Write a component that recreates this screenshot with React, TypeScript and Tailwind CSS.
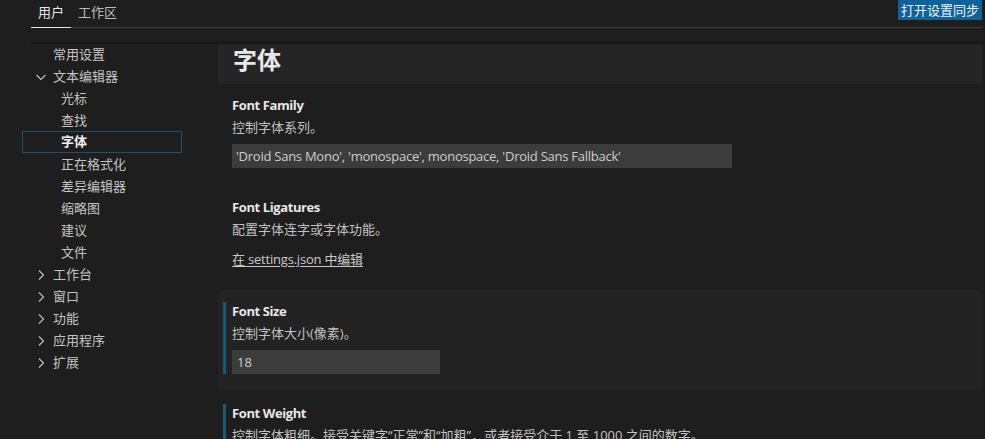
import React from "react";

const FONT = { fontFamily: '"Open Sans", "Noto Sans CJK SC", sans-serif' };

function ChevronRight() {
  return (
    <svg width="16" height="16" viewBox="0 0 16 16" fill="none" stroke="currentColor" strokeWidth="1.1">
      <path d="M6 3.5 L10.5 8 L6 12.5" />
    </svg>
  );
}

function ChevronDown() {
  return (
    <svg width="16" height="16" viewBox="0 0 16 16" fill="none" stroke="currentColor" strokeWidth="1.1">
      <path d="M3.5 6 L8 10.5 L12.5 6" />
    </svg>
  );
}

type Item = { label: string; level: 1 | 2; chevron?: "down" | "right"; selected?: boolean };

const items: Item[] = [
  { label: "常用设置", level: 1 },
  { label: "文本编辑器", level: 1, chevron: "down" },
  { label: "光标", level: 2 },
  { label: "查找", level: 2 },
  { label: "字体", level: 2, selected: true },
  { label: "正在格式化", level: 2 },
  { label: "差异编辑器", level: 2 },
  { label: "缩略图", level: 2 },
  { label: "建议", level: 2 },
  { label: "文件", level: 2 },
  { label: "工作台", level: 1, chevron: "right" },
  { label: "窗口", level: 1, chevron: "right" },
  { label: "功能", level: 1, chevron: "right" },
  { label: "应用程序", level: 1, chevron: "right" },
  { label: "扩展", level: 1, chevron: "right" },
];

export default function App() {
  return (
    <div
      className="w-[985px] h-[439px] overflow-hidden bg-[#1e1e1e] text-[#cccccc] text-[13px]"
      style={FONT}
    >
      {/* top tabs */}
      <div className="flex items-start ml-[31px] mr-[3px] h-[28px] border-b border-[#3f3f3f]">
        <div className="h-[28px] px-[7px] -mb-px border-b border-[#e7e7e7] text-[#e7e7e7] leading-[24px]">
          用户
        </div>
        <div className="h-[28px] px-[7px] text-[#bdbdbd] leading-[24px]">工作区</div>
        <div className="ml-auto h-[20px] px-[3px] bg-[#0e639c] text-[#f0f0f0] leading-[20px]">
          打开设置同步
        </div>
      </div>

      <div className="mt-[14px] ml-[31px] h-[2px] bg-[#161616]" />

      <div className="flex">
        {/* sidebar */}
        <div className="w-[218px] shrink-0 pl-[22px]">
          <div className="w-[160px]">
            {items.map((it) => (
              <div
                key={it.label}
                className={
                  it.selected
                    ? "relative h-[22px] flex items-center border border-[#1d4f6e] -mt-px mb-px font-bold text-[#f0f0f0]"
                    : "relative h-[22px] flex items-center text-[#c4c4c4]"
                }
              >
                {it.chevron && (
                  <span className="absolute left-[11px] top-[3px] text-[#c4c4c4]">
                    {it.chevron === "down" ? <ChevronDown /> : <ChevronRight />}
                  </span>
                )}
                <span className={it.level === 1 ? "pl-[31px]" : it.selected ? "pl-[38px]" : "pl-[39px]"}>
                  {it.label}
                </span>
              </div>
            ))}
          </div>
        </div>

        {/* main */}
        <div className="w-[764px] shrink-0">
          <div className="h-[40px] bg-[#252526] pl-[15px] text-[24px] font-bold leading-[32px] text-[#e8e8e8]">
            字体
          </div>

          {/* Font Family */}
          <div className="pt-[12px] pb-[18px] pl-[14px]">
            <div className="h-[18px] leading-[18px] font-bold tracking-[-0.4px] text-[#e7e7e7]">Font Family</div>
            <div className="mt-[4px] h-[18px] leading-[18px] text-[#c2c2c2]">控制字体系列。</div>
            <div className="mt-[8px] w-[500px] h-[24px] bg-[#3c3c3c] pl-[4px] leading-[24px] tracking-[-0.25px] text-[#cccccc]">
              'Droid Sans Mono', 'monospace', monospace, 'Droid Sans Fallback'
            </div>
          </div>

          {/* Font Ligatures */}
          <div className="pt-[12px] pb-[22px] pl-[14px]">
            <div className="h-[18px] leading-[18px] font-bold tracking-[-0.4px] text-[#e7e7e7]">Font Ligatures</div>
            <div className="mt-[4px] h-[18px] leading-[18px] text-[#c2c2c2]">配置字体连字或字体功能。</div>
            <div className="mt-[12px] h-[18px] leading-[18px] tracking-[-0.2px] text-[#c8c8c8] underline underline-offset-2">
              在 settings.json 中编辑
            </div>
          </div>

          {/* Font Size */}
          <div className="pt-[12px] pb-[17px] pl-[5px] bg-[#232323]">
            <div className="border-l-[3px] border-[#185a78] pl-[6px]">
              <div className="h-[18px] leading-[18px] font-bold tracking-[-0.4px] text-[#e7e7e7]">Font Size</div>
              <div className="mt-[4px] h-[18px] leading-[18px] text-[#c2c2c2]">控制字体大小(像素)。</div>
              <div className="mt-[8px] w-[208px] h-[24px] bg-[#3c3c3c] pl-[5px] leading-[24px] text-[#cccccc]">
                18
              </div>
            </div>
          </div>

          {/* Font Weight */}
          <div className="pt-[13px] pl-[5px]">
            <div className="border-l-[3px] border-[#185a78] pl-[6px]">
              <div className="h-[18px] leading-[18px] font-bold tracking-[-0.4px] text-[#e7e7e7]">Font Weight</div>
              <div className="mt-[4px] h-[18px] leading-[18px] text-[#c2c2c2]">
                控制字体粗细。接受关键字“正常”和“加粗”，或者接受介于 1 至 1000 之间的数字。
              </div>
              <div className="mt-[8px] h-[24px]" />
            </div>
          </div>
        </div>
      </div>
    </div>
  );
}
